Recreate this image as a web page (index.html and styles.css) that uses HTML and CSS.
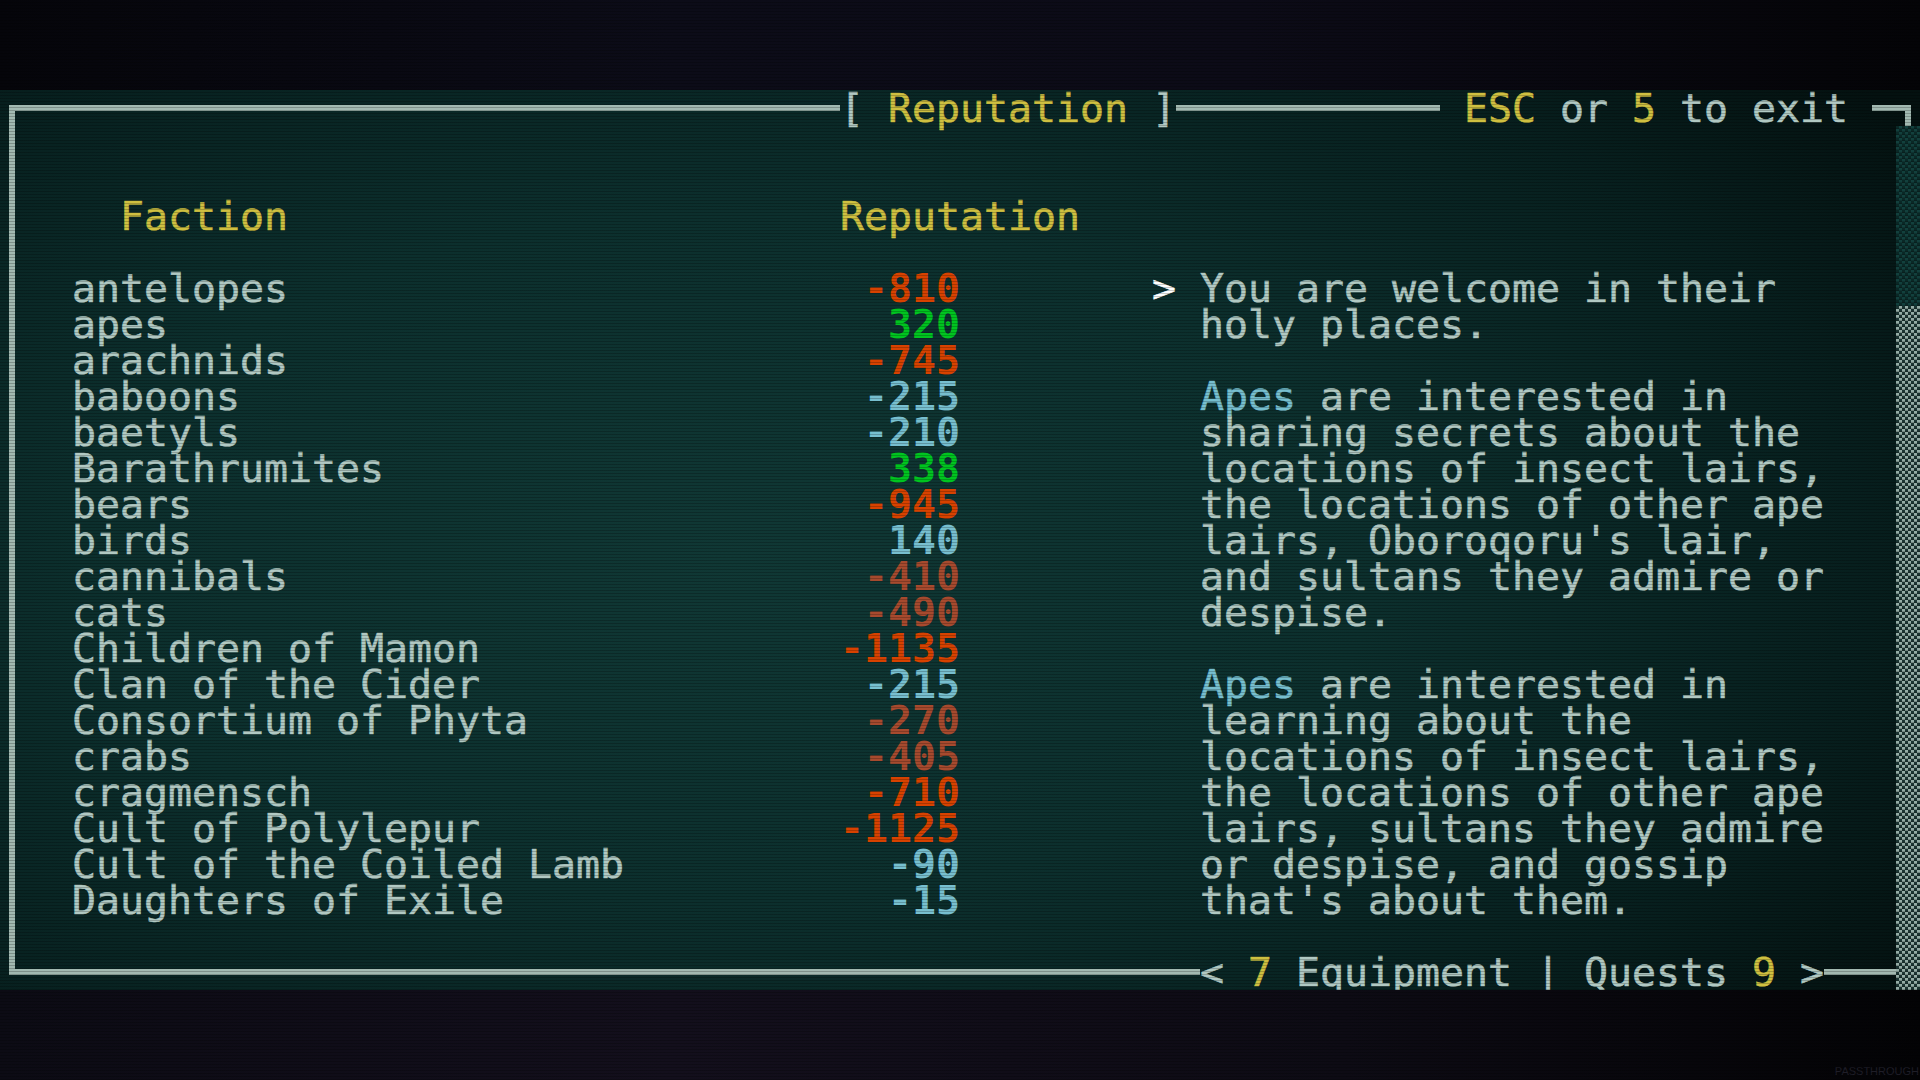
FILE: index.html
```html
<!DOCTYPE html>
<html lang="en">
<head>
    <meta charset="UTF-8">
    <meta name="viewport" content="width=device-width, initial-scale=1.0">
    <title>Reputation</title>
    <link rel="stylesheet" href="styles.css">
</head>
<body>
    <div class="screen">
        <div class="band band-top"></div>

        <div class="terminal">
            <!-- top edge: title + exit hint -->
            <div class="edge edge-top">
                <span class="corner corner-tl"></span>
                <span class="rule"></span>
                <span class="label">[ <span class="hl">Reputation</span> ]</span>
                <span class="rule rule-mid"></span>
                <span class="label"> <span class="hl">ESC</span> or <span class="hl">5</span> to exit </span>
                <span class="rule rule-one"></span>
                <span class="corner corner-tr"></span>
            </div>

            <div class="main">
                <div class="left-bar"></div>
                <div class="content">
                    <div class="headings">
                        <span class="h-faction">Faction</span>
                        <span class="h-rep">Reputation</span>
                    </div>

                    <div class="table">
                        <div class="names">
                            <div>antelopes</div>
                            <div>apes</div>
                            <div>arachnids</div>
                            <div>baboons</div>
                            <div>baetyls</div>
                            <div>Barathrumites</div>
                            <div>bears</div>
                            <div>birds</div>
                            <div>cannibals</div>
                            <div>cats</div>
                            <div>Children of Mamon</div>
                            <div>Clan of the Cider</div>
                            <div>Consortium of Phyta</div>
                            <div>crabs</div>
                            <div>cragmensch</div>
                            <div>Cult of Polylepur</div>
                            <div>Cult of the Coiled Lamb</div>
                            <div>Daughters of Exile</div>
                        </div>
                        <div class="scores">
                            <div class="rep-hate">-810</div>
                            <div class="rep-like">320</div>
                            <div class="rep-hate">-745</div>
                            <div class="rep-neutral">-215</div>
                            <div class="rep-neutral">-210</div>
                            <div class="rep-like">338</div>
                            <div class="rep-hate">-945</div>
                            <div class="rep-neutral">140</div>
                            <div class="rep-dislike">-410</div>
                            <div class="rep-dislike">-490</div>
                            <div class="rep-hate">-1135</div>
                            <div class="rep-neutral">-215</div>
                            <div class="rep-dislike">-270</div>
                            <div class="rep-dislike">-405</div>
                            <div class="rep-hate">-710</div>
                            <div class="rep-hate">-1125</div>
                            <div class="rep-neutral">-90</div>
                            <div class="rep-neutral">-15</div>
                        </div>
                        <div class="detail">
                            <div class="marker">&gt;</div>
                            <div class="notes">
                                <p>You are welcome in their holy places.</p>
                                <p><span class="fname">Apes</span> are interested in sharing secrets about the locations of insect lairs, the locations of other ape lairs, Oboroqoru's lair, and sultans they admire or despise.</p>
                                <p><span class="fname">Apes</span> are interested in learning about the locations of insect lairs, the locations of other ape lairs, sultans they admire or despise, and gossip that's about them.</p>
                            </div>
                        </div>
                    </div>
                </div>
            </div>

            <div class="scrollbar">
                <div class="track"></div>
                <div class="thumb"></div>
            </div>

            <!-- bottom edge: screen tabs -->
            <div class="edge edge-bottom">
                <span class="corner corner-bl"></span>
                <span class="rule"></span>
                <span class="label">&lt; <span class="hl">7</span> Equipment | Quests <span class="hl">9</span> &gt;</span>
                <span class="rule rule-three"></span>
            </div>
        </div>

        <div class="band band-bottom">
            <span class="watermark">PASSTHROUGH</span>
        </div>
    </div>
</body>
</html>
```

FILE: styles.css
```css
:root {
    --cw: 24px;
    --rh: 36px;
    --grey: #b1c9c3;
    --yellow: #cfc041;
    --line: #a2b9b1;
}

* {
    margin: 0;
    padding: 0;
    box-sizing: border-box;
}

body {
    width: 1920px;
    height: 1080px;
    overflow: hidden;
    background: #0a0a12;
    font-family: 'DejaVu Sans Mono', 'Liberation Mono', monospace;
    font-size: 39.86px;
    line-height: 36px;
    color: var(--grey);
}

.screen {
    display: flex;
    flex-direction: column;
    height: 1080px;
    position: relative;
}

/* CRT scanlines */
.screen::after {
    content: "";
    position: absolute;
    inset: 0;
    pointer-events: none;
    background: repeating-linear-gradient(to bottom, rgba(0, 0, 0, 0) 0 2px, rgba(0, 0, 0, 0.22) 2px 3px);
}

.band {
    height: 90px;
    flex: 0 0 90px;
}

.band-top {
    background: linear-gradient(90deg, #05050a, #0c0c18 35%, #0c0b17 65%, #040407);
}

.band-bottom {
    background: linear-gradient(90deg, #0c0b14, #130f1c 35%, #0d0b14 70%, #030305);
    display: flex;
    justify-content: flex-end;
    align-items: flex-end;
}

.watermark {
    font-family: 'Liberation Sans', sans-serif;
    font-size: 11px;
    line-height: 14px;
    color: #1f1e28;
    padding: 0 1px 2px 0;
    -webkit-text-stroke: 0;
}

/* 80 x 25 cell terminal */
.terminal {
    height: 900px;
    flex: 0 0 900px;
    overflow: hidden;
    display: grid;
    grid-template-columns: 1fr var(--cw);
    grid-template-rows: var(--rh) 1fr var(--rh);
    -webkit-text-stroke: 0.6px currentColor;
    background:
        radial-gradient(ellipse 75% 85% at 38% 52%, #103835 0%, #0c2f2d 45%, #071f1e 78%, #041110 100%);
}

.edge {
    display: flex;
    height: var(--rh);
    white-space: pre;
}

.edge-top {
    grid-column: 1 / 3;
    grid-row: 1;
}

.edge-bottom {
    grid-column: 1;
    grid-row: 3;
}

.label {
    color: var(--grey);
}

.hl {
    color: var(--yellow);
}

.rule {
    flex: 1;
    background: linear-gradient(var(--line), var(--line)) 0 15px / 100% 6px no-repeat;
}

.rule-mid {
    flex: 0 0 calc(var(--cw) * 11);
}

.rule-one {
    flex: 0 0 var(--cw);
}

.rule-three {
    flex: 0 0 calc(var(--cw) * 3);
}

.corner {
    flex: 0 0 var(--cw);
    height: var(--rh);
    background-image: linear-gradient(var(--line), var(--line)), linear-gradient(var(--line), var(--line));
    background-repeat: no-repeat;
    background-size: 15px 6px, 6px 21px;
}

.corner-tl {
    background-position: 9px 15px, 9px 15px;
}

.corner-tr {
    background-position: 0 15px, 9px 15px;
}

.corner-bl {
    background-position: 9px 15px, 9px 0;
}

.main {
    grid-column: 1;
    grid-row: 2;
    display: flex;
    min-height: 0;
}

.left-bar {
    flex: 0 0 var(--cw);
    background: linear-gradient(var(--line), var(--line)) 9px 0 / 6px 100% no-repeat;
}

.content {
    flex: 1;
    padding: calc(var(--rh) * 2) 0 0 calc(var(--cw) * 2);
}

.headings {
    display: flex;
    color: var(--yellow);
    margin-bottom: var(--rh);
}

.h-faction {
    width: calc(var(--cw) * 32);
    padding-left: calc(var(--cw) * 2);
}

.table {
    display: flex;
}

.names {
    width: calc(var(--cw) * 32);
    white-space: nowrap;
}

.scores {
    width: calc(var(--cw) * 5);
    text-align: right;
    font-weight: bold;
    -webkit-text-stroke: 0;
}

.rep-hate { color: #d74200; }
.rep-dislike { color: #a64a2e; }
.rep-neutral { color: #77bfcf; }
.rep-like { color: #00c420; }

.detail {
    margin-left: calc(var(--cw) * 8);
    display: flex;
}

.marker {
    width: calc(var(--cw) * 2);
    color: #ffffff;
}

.notes {
    width: calc(var(--cw) * 27);
}

.notes p {
    margin-bottom: var(--rh);
}

.fname {
    color: #77bfcf;
}

/* scrollbar column */
.scrollbar {
    grid-column: 2;
    grid-row: 2 / 4;
    display: flex;
    flex-direction: column;
}

.track {
    height: calc(var(--rh) * 5);
    background: repeating-conic-gradient(#12403d 0 25%, #0a2826 0 50%) 0 0 / 6px 6px;
}

.thumb {
    flex: 1;
    background: repeating-conic-gradient(#93aca5 0 25%, #1b3432 0 50%) 0 0 / 6px 6px;
}
```
